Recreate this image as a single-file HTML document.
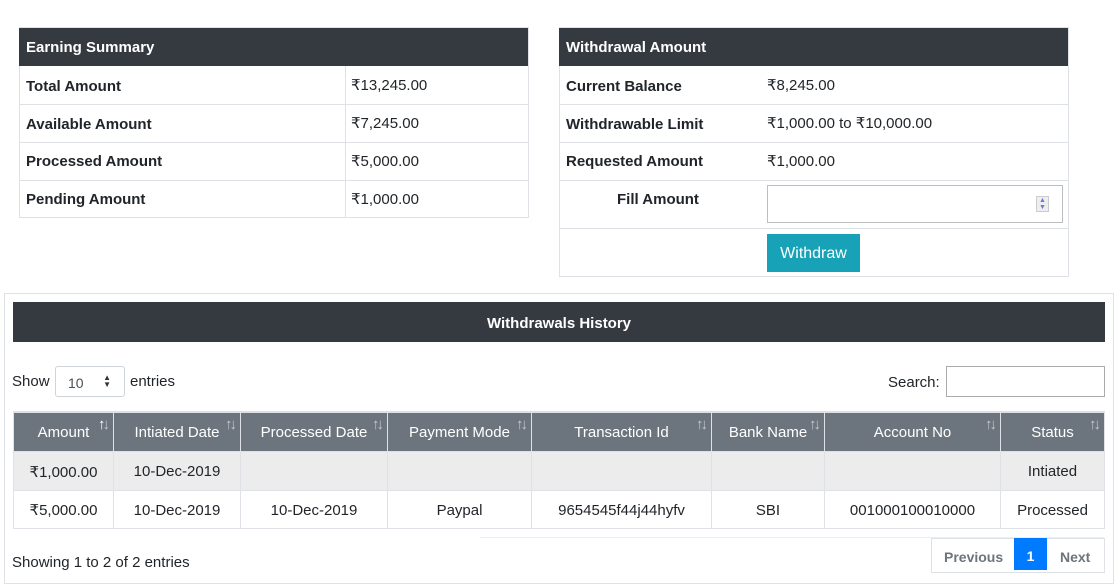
<!DOCTYPE html>
<html><head><meta charset="utf-8"><style>
*{box-sizing:border-box;margin:0;padding:0}
body{width:1116px;height:587px;background:#fff;font-family:"Liberation Sans","DejaVu Sans",sans-serif;font-size:15px;color:#212529;position:relative;overflow:hidden}
.a{position:absolute}
.hd{background:#343a40;color:#fff;font-weight:bold;font-size:15px}
table{border-collapse:collapse;position:absolute}
td,th{border:1px solid #dee2e6;padding-top:2px}
.b{font-weight:bold}
.sort{position:absolute;top:3px;right:6px;color:#c5c9cd;font-size:15px;letter-spacing:-3px}
</style></head><body>
<div class="a" style="left:19px;top:27px;width:510px;height:191px;border:1px solid #dee2e6"></div>
<div class="a hd" style="left:19px;top:28px;width:509px;height:38px;padding:11px 7px">Earning Summary</div>
<div class="a" style="left:345px;top:66px;width:1px;height:151px;background:#dee2e6"></div>
<div class="a" style="left:19px;top:104px;width:509px;height:1px;background:#dee2e6"></div>
<div class="a" style="left:19px;top:142px;width:509px;height:1px;background:#dee2e6"></div>
<div class="a" style="left:19px;top:180px;width:509px;height:1px;background:#dee2e6"></div>
<div class="a b" style="left:26px;top:78px">Total Amount</div><div class="a" style="left:351px;top:76px">₹13,245.00</div>
<div class="a b" style="left:26px;top:116px">Available Amount</div><div class="a" style="left:351px;top:114px">₹7,245.00</div>
<div class="a b" style="left:26px;top:153px">Processed Amount</div><div class="a" style="left:351px;top:152px">₹5,000.00</div>
<div class="a b" style="left:26px;top:191px">Pending Amount</div><div class="a" style="left:351px;top:190px">₹1,000.00</div>
<div class="a" style="left:559px;top:27px;width:510px;height:250px;border:1px solid #dee2e6"></div>
<div class="a hd" style="left:559px;top:28px;width:509px;height:38px;padding:11px 7px">Withdrawal Amount</div>
<div class="a" style="left:559px;top:104px;width:509px;height:1px;background:#dee2e6"></div>
<div class="a" style="left:559px;top:142px;width:509px;height:1px;background:#dee2e6"></div>
<div class="a" style="left:559px;top:180px;width:509px;height:1px;background:#dee2e6"></div>
<div class="a" style="left:559px;top:228px;width:509px;height:1px;background:#dee2e6"></div>
<div class="a b" style="left:566px;top:78px">Current Balance</div><div class="a" style="left:767px;top:76px">₹8,245.00</div>
<div class="a b" style="left:566px;top:116px">Withdrawable Limit</div><div class="a" style="left:767px;top:114px">₹1,000.00 to ₹10,000.00</div>
<div class="a b" style="left:566px;top:153px">Requested Amount</div><div class="a" style="left:767px;top:152px">₹1,000.00</div>
<div class="a b" style="left:617px;top:191px">Fill Amount</div>
<div class="a" style="left:767px;top:185px;width:296px;height:38px;border:1px solid #bdbdbd"></div>
<div class="a" style="left:1036px;top:196px;width:13px;height:16px;border:1px solid #ccc;background:#eee;font-size:7px;color:#6b7bd0;line-height:7px;text-align:center">▲<br>▼</div>
<div class="a" style="left:767px;top:234px;width:93px;height:38px;background:#17a2b8;color:#fff;font-size:16px;text-align:center;line-height:40px">Withdraw</div>
<div class="a" style="left:4px;top:293px;width:1110px;height:291px;border:1px solid #dee2e6"></div>
<div class="a hd" style="left:13px;top:302px;width:1092px;height:40px;text-align:center;line-height:44px">Withdrawals History</div>
<div class="a" style="left:12px;top:373px">Show</div>
<div class="a" style="left:55px;top:366px;width:70px;height:31px;border:1px solid #ced4da;border-radius:3px;font-size:14px;padding:8px 12px;color:#495057">10<span style="position:absolute;right:13px;top:7px;font-size:8px;line-height:7px;color:#333">▲<br>▼</span></div>
<div class="a" style="left:130px;top:373px">entries</div>
<div class="a" style="left:888px;top:374px">Search:</div>
<div class="a" style="left:946px;top:366px;width:159px;height:31px;border:1px solid #aaa"></div>
<table style="left:13px;top:411px;width:1092px">
<tr style="background:#6c757d;color:#fff;height:39px;border-top:2px solid #dee2e6">
<th style="width:100px;font-weight:normal;position:relative">Amount<span class="sort" style="color:#fff">↑<span style="color:#c5c9cd">↓</span></span></th>
<th style="width:127px;font-weight:normal;position:relative">Intiated Date<span class="sort">↑↓</span></th>
<th style="width:147px;font-weight:normal;position:relative">Processed Date<span class="sort">↑↓</span></th>
<th style="width:144px;font-weight:normal;position:relative">Payment Mode<span class="sort">↑↓</span></th>
<th style="width:180px;font-weight:normal;position:relative">Transaction Id<span class="sort">↑↓</span></th>
<th style="width:113px;font-weight:normal;position:relative">Bank Name<span class="sort">↑↓</span></th>
<th style="width:176px;font-weight:normal;position:relative">Account No<span class="sort">↑↓</span></th>
<th style="font-weight:normal;position:relative">Status<span class="sort">↑↓</span></th></tr>
<tr style="background:#ececec;height:39px;text-align:center"><td>₹1,000.00</td><td>10-Dec-2019</td><td></td><td></td><td></td><td></td><td></td><td>Intiated</td></tr>
<tr style="height:38px;text-align:center"><td>₹5,000.00</td><td>10-Dec-2019</td><td>10-Dec-2019</td><td>Paypal</td><td>9654545f44j44hyfv</td><td>SBI</td><td>001000100010000</td><td>Processed</td></tr>
</table>
<div class="a" style="left:480px;top:537px;width:624px;height:1px;background:#eee"></div>
<div class="a" style="left:12px;top:554px">Showing 1 to 2 of 2 entries</div>
<div class="a" style="left:931px;top:538px;width:174px;height:35px;border:1px solid #dee2e6"></div>
<div class="a b" style="left:944px;top:549px;color:#6c757d;font-size:14px">Previous</div>
<div class="a b" style="left:1014px;top:538px;width:33px;height:34px;background:#007bff;color:#fff;text-align:center;line-height:36px;font-size:14px;border-bottom:2px solid #fff">1</div>
<div class="a b" style="left:1060px;top:549px;color:#6c757d;font-size:14px">Next</div>
</body></html>
